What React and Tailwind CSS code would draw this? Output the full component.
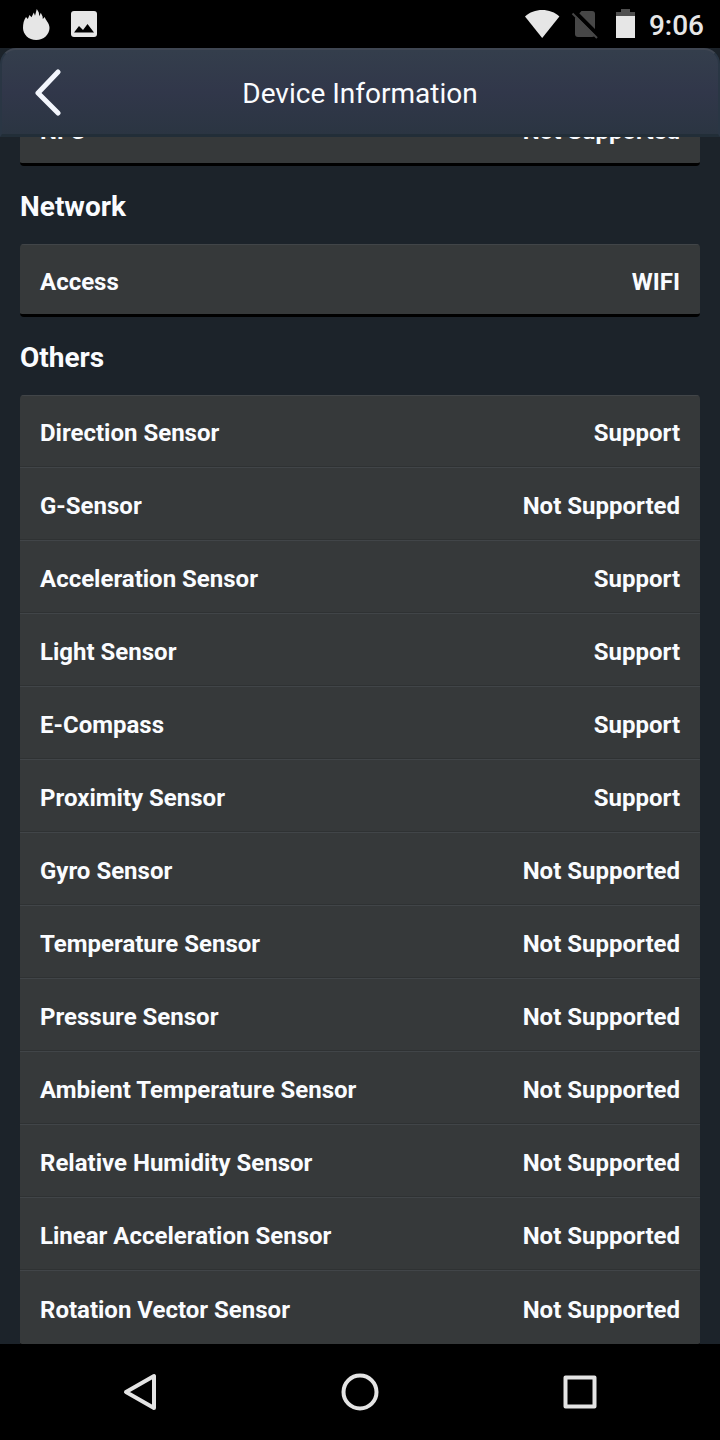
const HARDWARE = [{ label: 'NFC', value: 'Not Supported' }];

const NETWORK = [{ label: 'Access', value: 'WIFI' }];

const OTHERS = [
    { label: 'Direction Sensor', value: 'Support' },
    { label: 'G-Sensor', value: 'Not Supported' },
    { label: 'Acceleration Sensor', value: 'Support' },
    { label: 'Light Sensor', value: 'Support' },
    { label: 'E-Compass', value: 'Support' },
    { label: 'Proximity Sensor', value: 'Support' },
    { label: 'Gyro Sensor', value: 'Not Supported' },
    { label: 'Temperature Sensor', value: 'Not Supported' },
    { label: 'Pressure Sensor', value: 'Not Supported' },
    { label: 'Ambient Temperature Sensor', value: 'Not Supported' },
    { label: 'Relative Humidity Sensor', value: 'Not Supported' },
    { label: 'Linear Acceleration Sensor', value: 'Not Supported' },
    { label: 'Rotation Vector Sensor', value: 'Not Supported' },
];

function StatusBar() {
    return (
        <div className="flex h-12 shrink-0 items-center justify-between bg-black px-4 text-[#e6e6e6]">
            <div className="flex items-center gap-4 pl-1">
                <svg className="h-8 w-8" viewBox="0 0 32 32" fill="currentColor" aria-hidden="true">
                    <path d="M6 9l1.800 2L9.500 7l2 2.200L13.800 4.500l1.200 3.300L16.800 1l2 3.600.5 3.600 1.500-3.400 1.800 3.700.2 2.500 2-2c.5 2 1.200 2.700 2 4 1.800 2.600 2.700 4.400 2.700 7 0 6.400-5.800 12-13.300 12S3 26.400 3 20c0-4.300.8-7.800 3-11Z" />
                </svg>
                <svg className="h-8 w-8" viewBox="0 0 32 32" aria-hidden="true">
                    <rect x="3" y="3" width="26" height="26" rx="3" fill="currentColor" />
                    <path d="m6 24.500 5-6.500 4 4 4.500-6L26 24.500Z" fill="#000" />
                </svg>
            </div>
            <div className="flex items-center">
                <svg className="h-8 w-9" viewBox="0 0 36 32" fill="currentColor" aria-hidden="true">
                    <path d="M0 8.600C8.700-.3 25.700-.3 34.400 8.600L17.200 30Z" />
                </svg>
                <svg className="ml-2 h-8 w-8" viewBox="0 0 32 32" aria-hidden="true">
                    <path d="M12.500 3H23a3 3 0 0 1 3 3v20a3 3 0 0 1-3 3H9a3 3 0 0 1-3-3V10Z" fill="#474747" />
                    <path d="m5 3 24 24" stroke="#000" strokeWidth="4" />
                    <path d="m3.500 5.500 24.500 24.500" stroke="#474747" strokeWidth="2" />
                </svg>
                <svg className="ml-2 h-8 w-8" viewBox="0 0 32 32" aria-hidden="true">
                    <path d="M12 1h9v3h5v4H7V4h5Z" fill="#4f4f4f" />
                    <path d="M7 8h19v22H7Z" fill="currentColor" />
                </svg>
                <span className="ml-2 pt-1 text-[28px] leading-8 font-medium">9:06</span>
            </div>
        </div>
    );
}

function Header() {
    return (
        <header className="grid h-[89px] shrink-0 grid-cols-[96px_1fr_96px] items-center rounded-t-2xl border-x-2 border-t-2 border-b-3 border-x-[#2a3644] border-t-[#3f4652] border-b-[#222e38] bg-linear-to-b from-[#343e4c] via-[#31374a] to-[#2b3542]">
            <button type="button" aria-label="Back" className="flex h-full items-center pl-8">
                <svg className="h-12 w-8" viewBox="0 0 32 48" fill="none" aria-hidden="true">
                    <path d="M24 4 4 25l20 20" stroke="#f3f6fd" strokeWidth="5" strokeLinecap="round" strokeLinejoin="round" />
                </svg>
            </button>
            <h1 className="pt-1 text-center text-[28px] leading-8">Device Information</h1>
        </header>
    );
}

function SectionTitle({ children }) {
    return <h2 className="flex h-[78px] items-center pt-1 text-[28px] leading-8 font-bold">{children}</h2>;
}

function InfoCard({ rows }) {
    return (
        <dl className="overflow-hidden rounded-sm border-b-3 border-b-black bg-[#36393a]">
            {rows.map(({ label, value }) => (
                <div
                    key={label}
                    className="flex h-[73px] items-center justify-between border-t border-b border-t-[#414548] border-b-[#2f3233] px-5 pt-1 text-2xl font-bold first:h-[72px] last:h-[74px] last:border-b-0 only:h-[70px]"
                >
                    <dt>{label}</dt>
                    <dd>{value}</dd>
                </div>
            ))}
        </dl>
    );
}

function NavBar() {
    return (
        <nav className="flex h-24 shrink-0 items-center justify-center gap-43 bg-black text-[#e4e4e4]">
            <button type="button" aria-label="Back">
                <svg className="h-12 w-12" viewBox="0 0 48 48" fill="none" stroke="currentColor" strokeWidth="4" strokeLinejoin="round" aria-hidden="true">
                    <path d="M38 8v32L10 24Z" />
                </svg>
            </button>
            <button type="button" aria-label="Home">
                <svg className="h-12 w-12" viewBox="0 0 48 48" fill="none" stroke="currentColor" strokeWidth="4" aria-hidden="true">
                    <circle cx="24" cy="24" r="16.500" />
                </svg>
            </button>
            <button type="button" aria-label="Recent apps">
                <svg className="h-12 w-12" viewBox="0 0 48 48" fill="none" stroke="currentColor" strokeWidth="4" strokeLinejoin="round" aria-hidden="true">
                    <path d="M9.500 9.500h29v29h-29Z" />
                </svg>
            </button>
        </nav>
    );
}

export default function App() {
    return (
        <div className="flex h-screen flex-col bg-[#1c232a] font-[Roboto,sans-serif] text-[#fafcff]">
            <StatusBar />
            <Header />
            <main className="min-h-0 flex-1 overflow-hidden px-5">
                {/* list is scrolled part way past the previous section */}
                <div className="-mt-11">
                    <InfoCard rows={HARDWARE} />
                    <SectionTitle>Network</SectionTitle>
                    <InfoCard rows={NETWORK} />
                    <SectionTitle>Others</SectionTitle>
                    <InfoCard rows={OTHERS} />
                </div>
            </main>
            <NavBar />
        </div>
    );
}
